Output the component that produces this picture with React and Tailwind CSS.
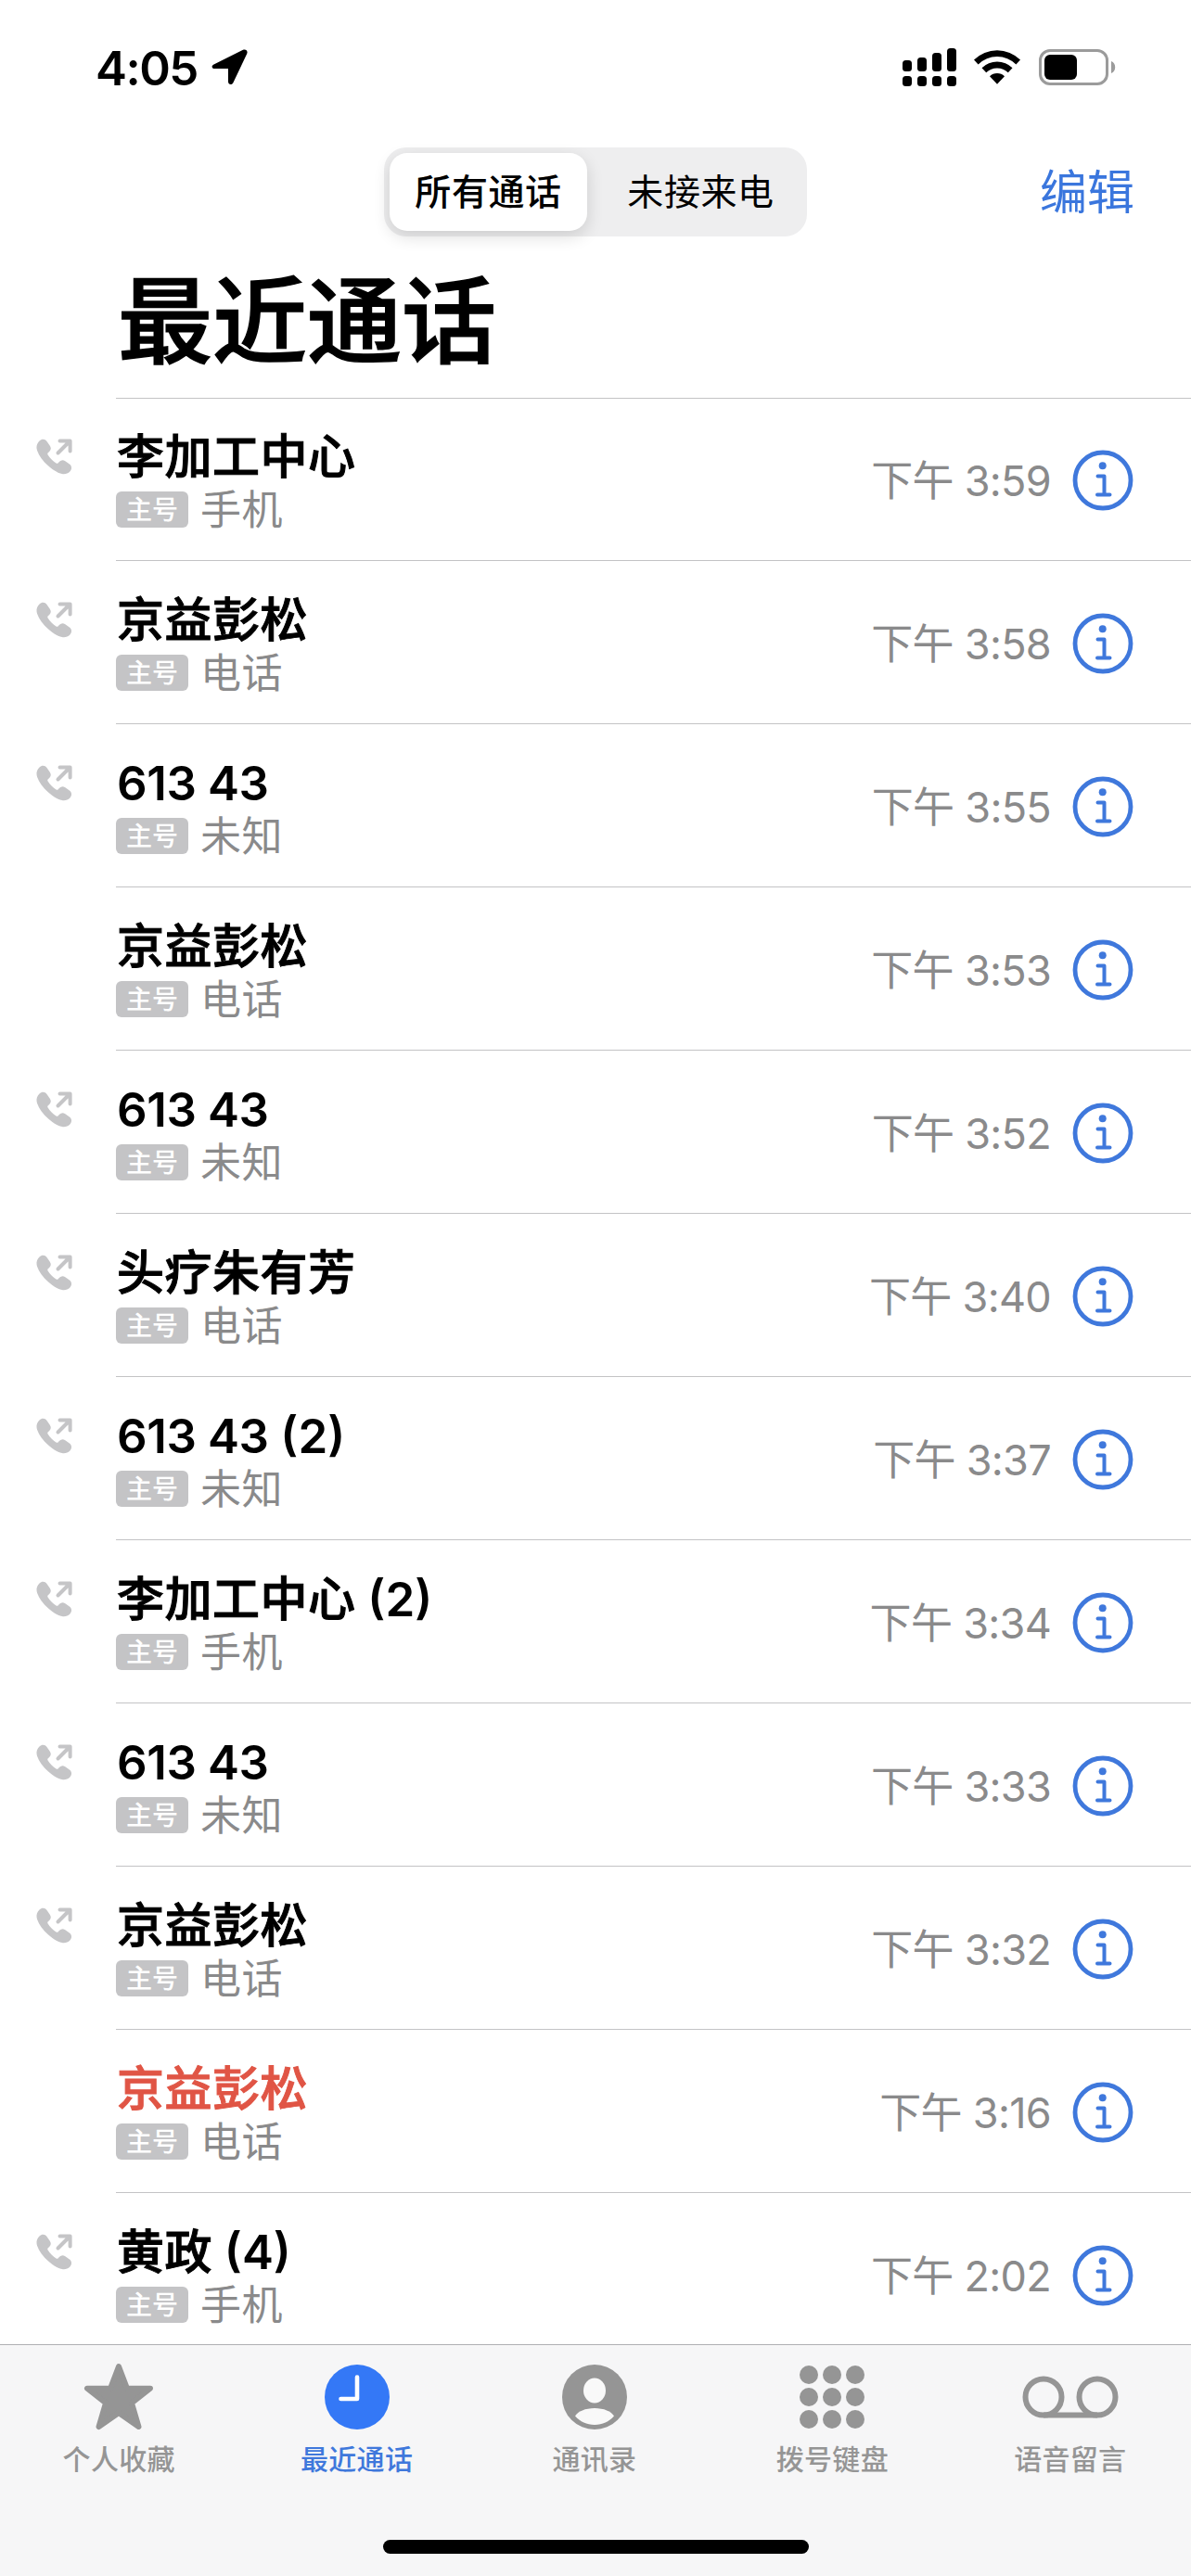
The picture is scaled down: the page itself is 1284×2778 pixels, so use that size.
const CALLS = [
  { name: '李加工中心', kind: '手机', time: '3:59', outgoing: true },
  { name: '京益彭松', kind: '电话', time: '3:58', outgoing: true },
  { name: '613 43', kind: '未知', time: '3:55', outgoing: true },
  { name: '京益彭松', kind: '电话', time: '3:53' },
  { name: '613 43', kind: '未知', time: '3:52', outgoing: true },
  { name: '头疗朱有芳', kind: '电话', time: '3:40', outgoing: true },
  { name: '613 43', count: 2, kind: '未知', time: '3:37', outgoing: true },
  { name: '李加工中心', count: 2, kind: '手机', time: '3:34', outgoing: true },
  { name: '613 43', kind: '未知', time: '3:33', outgoing: true },
  { name: '京益彭松', kind: '电话', time: '3:32', outgoing: true },
  { name: '京益彭松', kind: '电话', time: '3:16', missed: true },
  { name: '黄政', count: 4, kind: '手机', time: '2:02', outgoing: true },
];

function LocationIcon() {
  return (
    <svg className="w-[40px] h-[40px]" viewBox="0 0 40 40">
      <path d="M2.5 17.5 34 1.8C37 .4 39.6 3 38.2 6L23.5 37C22 40.200 18 39.500 18 36V22H3.500C.2 22-.5 19 2.500 17.500Z" />
    </svg>
  );
}

function SignalIcon() {
  return (
    <svg className="w-[58px] h-[41px]" viewBox="0 0 58 41">
      <rect x="0" y="13" width="10" height="12" rx="3.500" />
      <rect x="16" y="10" width="10" height="15" rx="3.500" />
      <rect x="32" y="5" width="10" height="20" rx="3.500" />
      <rect x="48" y="0" width="10" height="25" rx="3.500" />
      <rect x="0" y="30" width="10" height="11" rx="3.500" />
      <rect x="16" y="30" width="10" height="11" rx="3.500" />
      <rect x="32" y="30" width="10" height="11" rx="3.500" />
      <rect x="48" y="30" width="10" height="11" rx="3.500" />
    </svg>
  );
}

function WifiIcon() {
  return (
    <svg className="w-[50px] h-[37px]" viewBox="0 0 50 37">
      <path d="M0 10.500a35.500 35.500 0 0 1 50 0l-4.600 4.900a29 29 0 0 0-40.800 0Z" />
      <path d="M8.500 19.300a23.500 23.500 0 0 1 33 0l-4.700 4.900a17 17 0 0 0-23.600 0Z" />
      <path d="M17 28.200a11.700 11.700 0 0 1 16 0L25 36.800Z" />
    </svg>
  );
}

function BatteryIcon() {
  return (
    <svg className="w-[84px] h-[40px]" viewBox="0 0 84 40">
      <rect x="1.500" y="1.500" width="72" height="36" rx="10.500" fill="none" stroke="#9b9b9b" strokeWidth="3" />
      <rect x="6" y="6" width="35" height="27" rx="6" />
      <path d="M78 13c2.700 1 4.200 3.500 4.200 6.500S80.700 25 78 26Z" fill="#9b9b9b" />
    </svg>
  );
}

function OutgoingIcon() {
  return (
    <svg className="w-[40px] h-[40px]" viewBox="0 0 40 40" fill="#c5c5c7">
      <path d="M3.500 2.500C6 .2 9.500.2 11.500 3l3.300 4.700c1.500 2.200 1.300 4.300-.6 6.200l-1.400 1.400c-.7.700-.7 1.400-.2 2.200 1 1.700 2.300 3.200 4 4.900 1.700 1.700 3.300 3 4.900 4 .8.500 1.600.5 2.200-.2l1.400-1.400c1.900-1.900 4-2.100 6.200-.6l4.600 3.200c2.800 2 2.800 5.500.5 8-2.200 2.200-5.300 3.300-8.600 2.600-5-1-11.200-4.800-16.800-10.400C5.400 22 1.700 15.900.6 11 0 7.700 1.300 4.700 3.500 2.500Z" />
      <path d="M23.500 15.500 36 3M25.500 2.400H36.600V13.500" fill="none" stroke="#c5c5c7" strokeWidth="4" strokeLinecap="round" strokeLinejoin="round" />
    </svg>
  );
}

function InfoIcon() {
  return (
    <svg className="w-[66px] h-[66px]" viewBox="0 0 66 66" fill="none" stroke="#3f78dc" strokeLinecap="round" strokeLinejoin="round">
      <circle cx="33" cy="33" r="30" strokeWidth="4.800" />
      <path d="M27.500 28.500H34.500V48M27 48.500H40.500" strokeWidth="4" />
      <circle cx="32.700" cy="17.200" r="4" fill="#3f78dc" stroke="none" />
    </svg>
  );
}

function StarIcon() {
  return (
    <svg className="w-[76px] h-[74px]" viewBox="0 0 76 74">
      <path d="M38 4 47 27.700H72L52 43.500 59.500 69 38 54 16.500 69 24 43.500 4 27.700H29Z" fill="#959595" stroke="#959595" strokeWidth="6" strokeLinejoin="round" />
    </svg>
  );
}

function ClockIcon() {
  return (
    <svg className="w-[70px] h-[70px]" viewBox="0 0 70 70">
      <circle cx="35" cy="35" r="35" fill="#3478f6" />
      <path d="M35 13.500V37H17.500" fill="none" stroke="#fff" strokeWidth="4.600" strokeLinecap="round" strokeLinejoin="round" />
    </svg>
  );
}

function ContactIcon() {
  return (
    <svg className="w-[70px] h-[70px]" viewBox="0 0 70 70">
      <circle cx="35" cy="35" r="35" fill="#959595" />
      <ellipse cx="35" cy="28" rx="12" ry="13.500" fill="#f9f9f9" />
      <path d="M14 55.500C17 50.500 25 47 35 47s18 3.500 21 8.500C50.500 61.500 43.500 65 35 65S19.500 61.500 14 55.500Z" fill="#f9f9f9" />
    </svg>
  );
}

function KeypadIcon() {
  return (
    <div className="grid grid-cols-3 gap-x-[5px] gap-y-[4px]">
      {[1, 2, 3, 4, 5, 6, 7, 8, 9].map((n) => (
        <span key={n} className="w-[20px] h-[20px] rounded-full bg-[#959595]" />
      ))}
    </div>
  );
}

function VoicemailIcon() {
  return (
    <svg className="w-[104px] h-[46px]" viewBox="0 0 104 46" fill="none" stroke="#959595" strokeWidth="6">
      <circle cx="23" cy="23" r="19.500" />
      <circle cx="81" cy="23" r="19.500" />
      <path d="M23 42.500H81" />
    </svg>
  );
}

const TABS = [
  { label: '个人收藏', Icon: StarIcon },
  { label: '最近通话', Icon: ClockIcon, active: true },
  { label: '通讯录', Icon: ContactIcon },
  { label: '拨号键盘', Icon: KeypadIcon },
  { label: '语音留言', Icon: VoicemailIcon },
];

function StatusBar() {
  return (
    <div className="h-[159px] pt-[52px] pl-[103px] pr-[80px] flex items-start justify-between">
      <div className="flex items-start">
        <span className="w-[125px] text-[51px] leading-[43px] font-semibold tracking-[-1.5px]">4:05</span>
        <LocationIcon />
      </div>
      <div className="flex items-start">
        <SignalIcon />
        <div className="ml-[19px] mt-[2px]"><WifiIcon /></div>
        <div className="ml-[20px] mt-px"><BatteryIcon /></div>
      </div>
    </div>
  );
}

function Header() {
  return (
    <header>
      <div className="h-[96px] grid grid-cols-[1fr_456px_1fr]">
        <div />
        <div className="h-[96px] p-[6px] rounded-[24px] bg-[#eeeeef] flex items-center text-[39px] tracking-[0.6px]">
          <div className="w-[213px] h-[84px] rounded-[19px] bg-white shadow-[0_6px_18px_rgba(0,0,0,0.14)] flex items-center justify-center font-medium">所有通话</div>
          <div className="flex-1 pl-[14px] text-center">未接来电</div>
        </div>
        <div className="pt-[3px] pr-[61px] flex items-center justify-end text-[51px] text-[#3a76dd]">编辑</div>
      </div>
      <h1 className="h-[174px] pt-[37px] pl-[127px] text-[102px] leading-[110px] font-medium [-webkit-text-stroke:1.5px_black]">最近通话</h1>
      <div className="ml-[125px] h-px bg-[#c3c3c5]" />
    </header>
  );
}

function CallRow({ name, count, kind, time, outgoing, missed }) {
  const numeric = /^\d/.test(name);
  return (
    <li className="h-[176px] flex">
      <div className="w-[125px] pl-[39px] pt-[44px]">{outgoing && <OutgoingIcon />}</div>
      <div className="flex-1 border-b border-[#c3c3c5] flex">
        <div className="flex-1 pt-[37px]">
          <div className={`pl-[1px] h-[54px] leading-[54px] text-[51px] whitespace-pre ${missed ? 'text-[#e05545]' : 'text-black'}`}>
            <span className={numeric ? 'font-semibold tracking-[-0.4px]' : 'font-medium tracking-[0.5px] [-webkit-text-stroke:1px_currentColor]'}>{name}</span>
            {count && <span className="font-semibold">{` (${count})`}</span>}
          </div>
          <div className="mt-[4px] flex items-center h-[51px]">
            <span className="w-[78px] h-[39px] rounded-[6px] bg-[#c4c4c6] text-white text-[28px] leading-[40px] font-medium text-center">主号</span>
            <span className="ml-[13px] pt-[2px] text-[44px] leading-[51px] text-[#8a8a8b] tracking-[0.5px]">{kind}</span>
          </div>
        </div>
        <div className="h-[177px] pr-[62px] flex items-center">
          <span className="pt-[2px] text-[45px] text-[#8a8a8b] tracking-[-0.7px]">下午 {time}</span>
          <div className="ml-[23px]"><InfoIcon /></div>
        </div>
      </div>
    </li>
  );
}

function TabBar() {
  return (
    <nav className="h-[250px] shrink-0 border-t border-[#b0b0b3] bg-[#f6f6f7] flex flex-col">
      <div className="flex">
        {TABS.map(({ label, Icon, active }) => (
          <div key={label} className="w-[256.4px] flex flex-col items-center">
            <div className="h-[112px] flex items-center"><Icon /></div>
            <span className={`-mt-[9px] text-[30px] leading-[40px] font-medium tracking-[0.3px] ${active ? 'text-[#3f78dc]' : 'text-[#959595]'}`}>{label}</span>
          </div>
        ))}
      </div>
      <div className="mt-[67px] mx-auto w-[459px] h-[15px] rounded-full bg-black" />
    </nav>
  );
}

export default function App() {
  return (
    <div className="w-[1284px] h-[2778px] overflow-hidden bg-white text-black flex flex-col font-['Inter','Noto_Sans_CJK_SC',sans-serif]">
      <StatusBar />
      <Header />
      <ul className="-mt-px flex-1 min-h-0 overflow-hidden">
        {CALLS.map((call) => (
          <CallRow key={call.time} {...call} />
        ))}
      </ul>
      <TabBar />
    </div>
  );
}
